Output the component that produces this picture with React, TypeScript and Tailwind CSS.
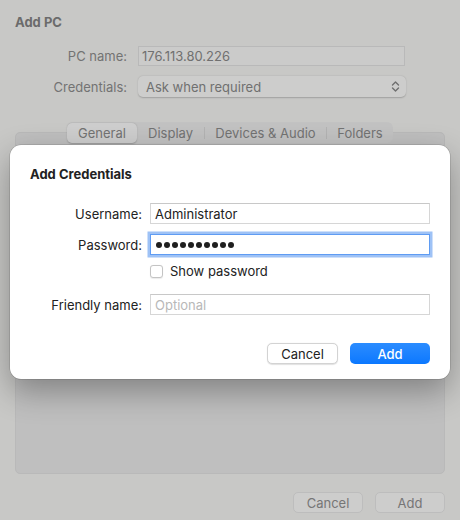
import React from "react";

function Chevrons() {
  return (
    <svg width="9" height="13" viewBox="0 0 9 13" fill="none" stroke="#6f6f6f" strokeWidth="1.4" strokeLinecap="round" strokeLinejoin="round">
      <path d="M1.5 5 L4.5 2 L7.5 5" />
      <path d="M1.5 8 L4.5 11 L7.5 8" />
    </svg>
  );
}

export default function App() {
  const dots = Array.from({ length: 10 });
  return (
    <div
      className="relative w-[460px] h-[520px] overflow-hidden bg-[#c8c8c6] text-[13px] leading-[16px]"
      style={{ fontFamily: "Inter, 'Liberation Sans', sans-serif" }}
    >
      {/* Underlying dimmed window */}
      <div className="flex flex-col px-[15px] pt-[14px]">
        <div className="font-bold text-[#6b6b6b] h-[16px]">Add PC</div>

        <div className="mt-[16px] flex flex-col gap-[10px]">
          <div className="flex items-center">
            <div className="w-[112px] text-right text-[#737373]">PC name:</div>
            <div className="ml-[11px] w-[267px] h-[20px] border border-[#b9b9b9] bg-[#cbcbca] flex items-center px-[3px] text-[#707070]">
              176.113.80.226
            </div>
          </div>
          <div className="flex items-center">
            <div className="w-[112px] text-right text-[#737373]">Credentials:</div>
            <div className="ml-[11px] w-[268px] h-[21px] rounded-[5px] bg-[#cdcdcc] shadow-[0_0.5px_1.5px_rgba(0,0,0,0.2)] flex items-center justify-between pl-[8px] pr-[6px] text-[#707070]">
              <span>Ask when required</span>
              <Chevrons />
            </div>
          </div>
        </div>

        {/* Tab panel */}
        <div className="relative mt-[35px] h-[342px] rounded-[5px] border border-[#b9b9b9] bg-[#bfbfbf]">
          <div className="absolute left-1/2 -translate-x-1/2 -top-[11px] flex items-center h-[21px] rounded-[6px] bg-[#c2c2c2] text-[#737373]">
            <div className="w-[70px] h-[20px] rounded-[5px] bg-[#cecece] shadow-[0_0.5px_1.5px_rgba(0,0,0,0.2)] flex items-center justify-center">General</div>
            <div className="w-[67px] flex items-center justify-center">Display</div>
            <div className="w-px h-[12px] bg-[#b3b3b3]" />
            <div className="w-[121px] flex items-center justify-center">Devices &amp; Audio</div>
            <div className="w-px h-[12px] bg-[#b3b3b3]" />
            <div className="w-[66px] flex items-center justify-center">Folders</div>
          </div>
        </div>

        <div className="mt-[18px] flex justify-end gap-[12px]">
          <div className="w-[70px] h-[21px] rounded-[5px] bg-[#cdcdcc] border border-[#bdbdbd] flex items-center justify-center text-[#767676]">Cancel</div>
          <div className="w-[70px] h-[21px] rounded-[5px] bg-[#cdcdcc] border border-[#bdbdbd] flex items-center justify-center text-[#767676]">Add</div>
        </div>
      </div>

      {/* Sheet dialog */}
      <div className="absolute left-[10px] top-[145px] w-[440px] h-[234px] rounded-[11px] bg-white shadow-[0_12px_32px_rgba(0,0,0,0.32),0_0_0_0.5px_rgba(0,0,0,0.2)] px-[20px] pt-[21px] text-[#222222]">
        <div className="font-bold">Add Credentials</div>

        <div className="mt-[21px] flex flex-col">
          <div className="flex items-center">
            <div className="w-[112px] text-right">Username:</div>
            <div className="ml-[8px] flex-1 h-[21px] border border-[#d6d6d6] border-t-[#c8c8c8] flex items-center px-[4px]">
              Administrator
            </div>
          </div>

          <div className="mt-[10px] flex items-center">
            <div className="w-[112px] text-right">Password:</div>
            <div className="ml-[8px] flex-1 h-[21px] border border-[#5f9cf3] shadow-[0_0_0_2.5px_#9ec2f6] flex items-center gap-[2px] px-[5px]">
              {dots.map((_, i) => (
                <div key={i} className="w-[6px] h-[6px] rounded-full bg-[#1f1f1f]" />
              ))}
            </div>
          </div>

          <div className="mt-[8px] ml-[120px] flex items-center gap-[7px]">
            <div className="w-[13px] h-[13px] rounded-[3px] border border-[#c4c4c4] bg-white shadow-[0_0.5px_1px_rgba(0,0,0,0.08)]" />
            <span>Show password</span>
          </div>

          <div className="mt-[15px] flex items-center">
            <div className="w-[112px] text-right">Friendly name:</div>
            <div className="ml-[8px] flex-1 h-[21px] border border-[#d6d6d6] border-t-[#c8c8c8] flex items-center px-[4px] text-[#b8b8b8]">
              Optional
            </div>
          </div>
        </div>

        <div className="mt-[28px] flex justify-end gap-[12px]">
          <div className="w-[71px] h-[21px] rounded-[5px] bg-white border border-[#d3d3d3] shadow-[0_0.5px_1px_rgba(0,0,0,0.12)] flex items-center justify-center">Cancel</div>
          <div className="w-[80px] h-[21px] rounded-[5px] bg-gradient-to-b from-[#2a8cff] to-[#0a78ff] text-white font-medium flex items-center justify-center">Add</div>
        </div>
      </div>
    </div>
  );
}
